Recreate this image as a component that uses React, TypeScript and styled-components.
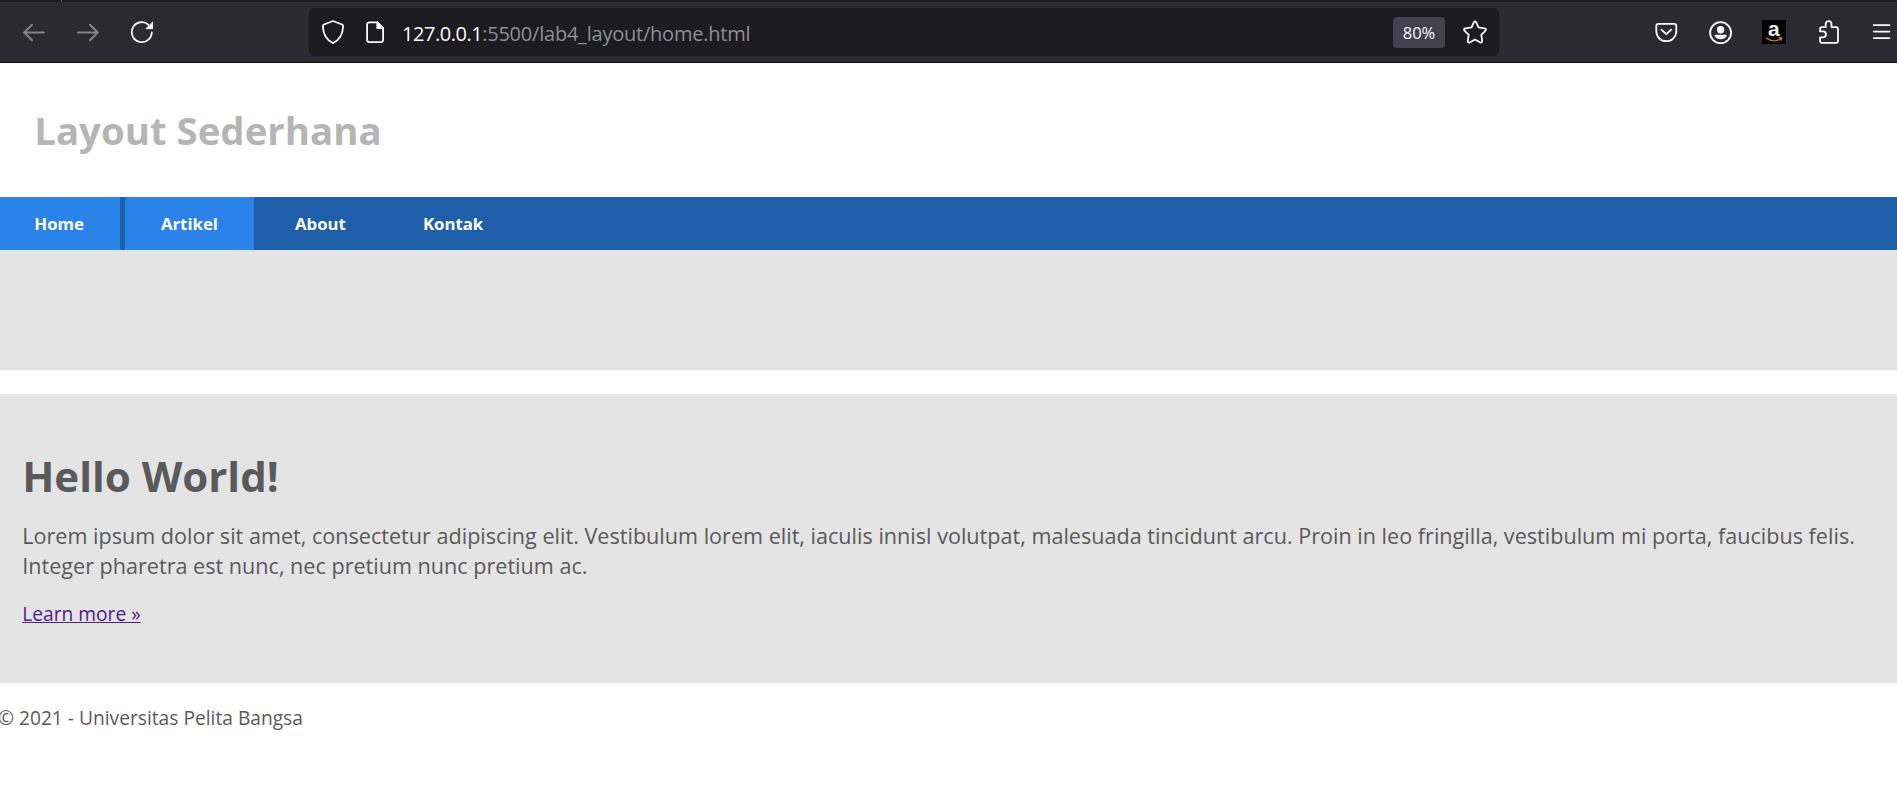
import React from 'react';
import styled, { createGlobalStyle } from 'styled-components';

const GlobalStyle = createGlobalStyle`
  *, *::before, *::after { box-sizing: border-box; }
  body {
    margin: 0;
    background: #fff;
    color: #5a5a5a;
    font-family: "Open Sans", "Noto Sans", sans-serif;
    font-size: 19.2px;
    line-height: 26px;
    overflow: hidden;
  }
`;

const Page = styled.div`
  min-height: 100vh;
  background: #fff;
`;

/* Browser chrome */

const TabStrip = styled.div`
  display: flex;
  height: 2px;
  padding-left: 61px;
  background: #1c1b22;
`;

const TabDivider = styled.span`
  width: 1px;
  background: #5b5a63;
`;

const Toolbar = styled.div`
  display: flex;
  align-items: center;
  height: 61px;
  padding: 0 3px 0 22px;
  background: #2b2a33;
  border-bottom: 1px solid #0c0c0d;
`;

const IconGroup = styled.div`
  display: flex;
  flex: none;
  gap: 30px;
`;

const AddressBar = styled.div`
  display: flex;
  flex: 1;
  align-items: center;
  height: 48px;
  margin: 0 155px;
  padding: 0 12px;
  border-radius: 5px;
  background: #1c1b22;
`;

const Icon = styled.svg<{ $dim?: boolean }>`
  display: block;
  flex: none;
  width: 24px;
  height: 24px;
  overflow: visible;
  fill: none;
  stroke: ${({ $dim }) => ($dim ? '#84838a' : '#fbfbfe')};
  stroke-width: ${({ $dim }) => ($dim ? '2' : '1.8')};
  stroke-linecap: round;
  stroke-linejoin: round;
`;

const SiteIcons = styled.div`
  display: flex;
  gap: 18px;
`;

const Url = styled.div`
  flex: 1;
  margin-left: 15px;
  padding-top: 3px;
  color: #8f8e95;
  font-size: 20px;
  letter-spacing: -0.22px;
  white-space: nowrap;
`;

const UrlHost = styled.span`
  color: #fbfbfe;
  letter-spacing: -0.47px;
`;

const ZoomBadge = styled.div`
  width: 52px;
  height: 31px;
  margin-right: 18px;
  border-radius: 4px;
  background: #42414d;
  color: #fbfbfe;
  font-size: 16.5px;
  line-height: 31px;
  text-align: center;
`;

/* Web page */

const Header = styled.header`
  height: 134px;
  padding: 41px 34.2px 0;
`;

const SiteTitle = styled.h1`
  margin: 0;
  color: #b5b5b5;
  font-size: 38.4px;
  line-height: 52px;
`;

const Nav = styled.nav`
  display: flex;
  gap: 5px;
  height: 53px;
  background: #1f5faa;
`;

const NavLink = styled.a<{ $active?: boolean; $first?: boolean }>`
  padding: 0 36px 0 ${({ $first }) => ($first ? '34.3px' : '36px')};
  background: ${({ $active }) => ($active ? '#2b83ea' : 'transparent')};
  color: #fff;
  font-size: 16.8px;
  font-weight: 700;
  line-height: 53px;
  text-decoration: none;
`;

const Banner = styled.section`
  height: 120px;
  margin-bottom: 24px;
  background: #e4e4e4;
`;

const Hero = styled.section`
  height: 289px;
  padding: 53px 24px 0 22.2px;
  background: #e4e4e4;
`;

const HeroTitle = styled.h1`
  margin: 0 0 16px;
  font-size: 42px;
  line-height: 58px;
`;

const HeroText = styled.p`
  margin: 0 0 20px;
  font-size: 21.6px;
  line-height: 30px;
`;

const MoreLink = styled.a`
  color: #551a8b;
  text-decoration: underline;
`;

const Footer = styled.footer`
  padding-top: 22px;
  text-indent: -2px;
`;

const navItems = [
  { label: 'Home', active: true },
  { label: 'Artikel', active: true },
  { label: 'About', active: false },
  { label: 'Kontak', active: false },
];

const BackIcon = () => (
  <Icon $dim viewBox="0 0 24 24"><path d="M22 12.5H2M10 4.7L2.2 12.5L10 20.3" /></Icon>
);

const ForwardIcon = () => (
  <Icon $dim viewBox="0 0 24 24"><path d="M2 12.5H22M14 4.7L21.8 12.5L14 20.3" /></Icon>
);

const ReloadIcon = () => (
  <Icon viewBox="0 0 24 24">
    <path d="M21.8 12.3A10 10 0 1 1 18.6 4.8" />
    <path d="M22.6 2.3V8.7H16.2Z" fill="#fbfbfe" stroke="#fbfbfe" strokeWidth="0.8" />
  </Icon>
);

const ShieldIcon = () => (
  <Icon viewBox="0 0 24 24">
    <path d="M12 1L21 4.5Q22.2 5 22.1 6.3C21.9 14.5 18.5 20 12 23.1C5.5 20 2.1 14.5 1.9 6.3Q1.8 5 3 4.5Z" />
  </Icon>
);

const DocumentIcon = () => (
  <Icon viewBox="0 0 24 24">
    <path d="M14.3 2.3H6.4A2.3 2.3 0 0 0 4.1 4.6V19.8A2.3 2.3 0 0 0 6.4 22.1H17.8A2.3 2.3 0 0 0 20.1 19.8V8.2Z" />
    <path d="M14.3 2.3V8.2H20.1Z" fill="#fbfbfe" />
  </Icon>
);

const StarIcon = () => (
  <Icon viewBox="0 0 24 24">
    <path d="M10.9 2.2Q12 .6 13.1 2.2L15.5 7.4L21.6 8.3Q23.8 9 22.5 10.6L18.3 14.9L19.2 20.8Q19.2 23.2 17 22.3L12 19.5L7 22.3Q4.8 23.2 4.8 20.8L5.7 14.9L1.5 10.6Q.2 9 2.4 8.3L8.5 7.4Z" />
  </Icon>
);

const PocketIcon = () => (
  <Icon viewBox="0 0 24 24">
    <path d="M4.3 3.8H20.3A2 2 0 0 1 22.3 5.8V11.2A10 10 0 0 1 2.3 11.2V5.8A2 2 0 0 1 4.3 3.8Z" />
    <path d="M7.4 9.6L12.3 14.2L17.2 9.6" />
  </Icon>
);

const AccountIcon = () => (
  <Icon viewBox="0 0 24 24">
    <circle cx="12.6" cy="12.7" r="10.5" />
    <circle cx="12.6" cy="9.8" r="3.7" fill="#fbfbfe" stroke="none" />
    <path d="M7.5 14.8H17.7Q19.2 14.8 18.6 16.1Q16.6 19.3 12.6 19.3Q8.6 19.3 6.6 16.1Q6 14.8 7.5 14.8Z" fill="#fbfbfe" stroke="none" />
  </Icon>
);

const AmazonIcon = () => (
  <Icon viewBox="0 0 24 24">
    <rect width="24" height="24" rx="1" fill="#000" stroke="none" />
    <text x="11.8" y="16.3" textAnchor="middle" fontSize="21" fontWeight="700" fontFamily="Liberation Sans, sans-serif" fill="#eeeeee" stroke="none">a</text>
    <path d="M4.3 18.1Q12 23.4 19.2 18.6M17.2 17.8L19.9 17.7L19.3 20" stroke="#c07a10" strokeWidth="1.4" />
  </Icon>
);

const PuzzleIcon = () => (
  <Icon viewBox="0 0 24 24">
    <path d="M4.1 11.4V8.9A1.8 1.8 0 0 1 5.9 7.1H9.7V4A2.9 2.9 0 0 1 15.5 4V7.1H20.2A1.8 1.8 0 0 1 22 8.9V21.1A1.8 1.8 0 0 1 20.2 22.9H5.9A1.8 1.8 0 0 1 4.1 21.1V17.3H7A2.95 2.95 0 0 0 7 11.4Z" />
  </Icon>
);

const MenuIcon = () => (
  <Icon viewBox="0 0 24 24"><path d="M3.8 5.1H19.4M3.8 11.6H19.4M3.8 18.1H19.4" /></Icon>
);

export default function App() {
  return (
    <Page>
      <GlobalStyle />
      <TabStrip><TabDivider /></TabStrip>
      <Toolbar>
        <IconGroup>
          <BackIcon />
          <ForwardIcon />
          <ReloadIcon />
        </IconGroup>
        <AddressBar>
          <SiteIcons>
            <ShieldIcon />
            <DocumentIcon />
          </SiteIcons>
          <Url><UrlHost>127.0.0.1</UrlHost>:5500/lab4_layout/home.html</Url>
          <ZoomBadge>80%</ZoomBadge>
          <StarIcon />
        </AddressBar>
        <IconGroup>
          <PocketIcon />
          <AccountIcon />
          <AmazonIcon />
          <PuzzleIcon />
          <MenuIcon />
        </IconGroup>
      </Toolbar>
      <Header>
        <SiteTitle>Layout Sederhana</SiteTitle>
      </Header>
      <Nav>
        {navItems.map(({ label, active }, i) => (
          <NavLink key={label} $active={active} $first={i === 0}>{label}</NavLink>
        ))}
      </Nav>
      <Banner />
      <Hero>
        <HeroTitle>Hello World!</HeroTitle>
        <HeroText>
          Lorem ipsum dolor sit amet, consectetur adipiscing elit. Vestibulum lorem elit, iaculis innisl
          volutpat, malesuada tincidunt arcu. Proin in leo fringilla, vestibulum mi porta, faucibus felis.
          Integer pharetra est nunc, nec pretium nunc pretium ac.
        </HeroText>
        <MoreLink href="#">Learn more »</MoreLink>
      </Hero>
      <Footer>© 2021 - Universitas Pelita Bangsa</Footer>
    </Page>
  );
}
